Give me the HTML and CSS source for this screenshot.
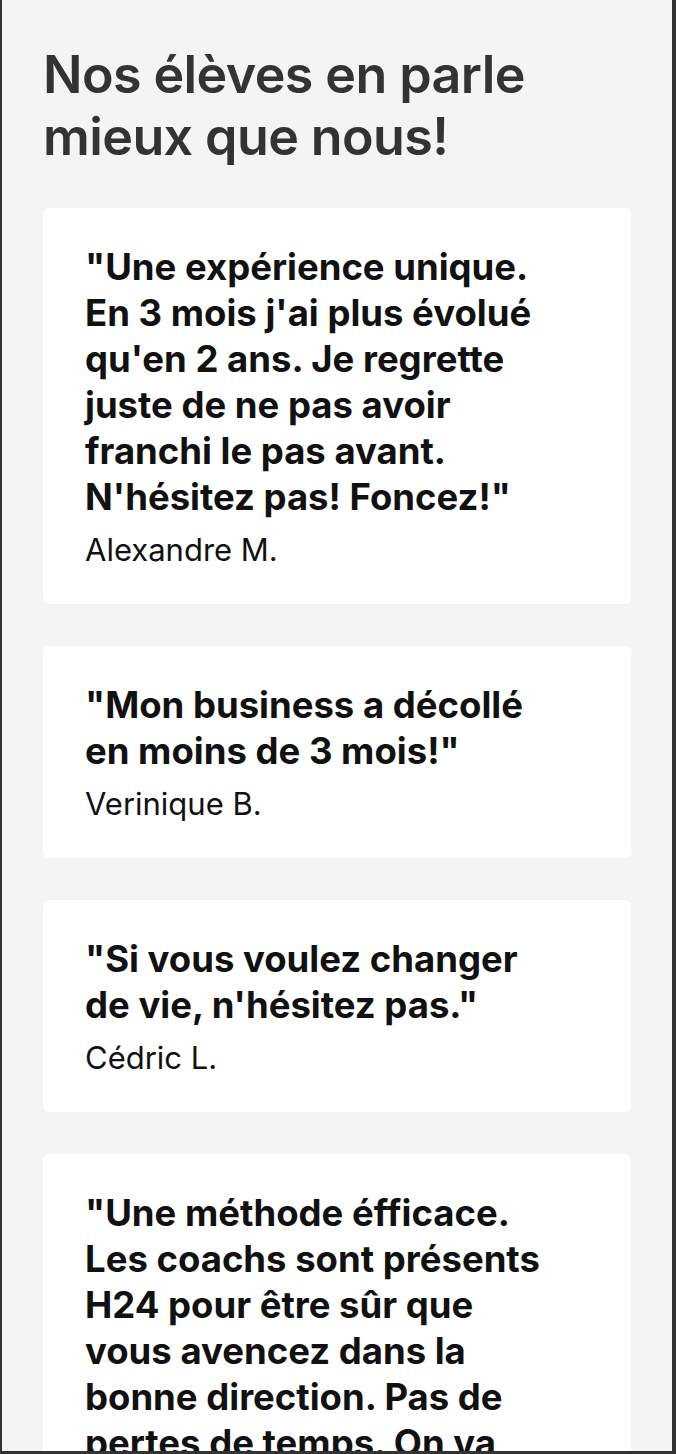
FILE: index.html
```html
<!DOCTYPE html>
<html lang="fr">
<head>
<meta charset="utf-8">
<title>Témoignages</title>
<link rel="stylesheet" href="styles.css">
</head>
<body>
<div class="frame">
  <section class="testimonials">
    <h1 class="title">Nos élèves en parle mieux que nous!</h1>
    <div class="list">
      <article class="card">
        <p class="quote">"Une expérience unique. En 3 mois j'ai plus évolué qu'en 2 ans. Je regrette juste de ne pas avoir franchi le pas avant. N'hésitez pas! Foncez!"</p>
        <p class="author">Alexandre M.</p>
      </article>
      <article class="card">
        <p class="quote">"Mon business a décollé en moins de 3 mois!"</p>
        <p class="author">Verinique B.</p>
      </article>
      <article class="card">
        <p class="quote">"Si vous voulez changer de vie, n'hésitez pas."</p>
        <p class="author">Cédric L.</p>
      </article>
      <article class="card">
        <p class="quote">"Une méthode éfficace. Les coachs sont présents H24 pour être sûr que vous avencez dans la bonne direction. Pas de pertes de temps. On va droit au but!"</p>
        <p class="author">Julien R.</p>
      </article>
    </div>
  </section>
</div>
</body>
</html>
```

FILE: styles.css
```css
html, body {
  margin: 0;
  padding: 0;
}

body {
  background: #f4f4f4;
  font-family: Inter, "Noto Sans", "Liberation Sans", sans-serif;
}

.frame {
  box-sizing: border-box;
  height: 100vh;
  overflow: hidden;
  border-left: 2px solid #333;
  border-right: 4px solid #333;
  border-bottom: 3px solid #333;
  background: #f4f4f4;
}

.testimonials {
  padding: 44px 41px 40px;
}

.title {
  margin: 0 0 40px;
  font-size: 52px;
  line-height: 62px;
  font-weight: 600;
  color: #333;
  letter-spacing: -0.6px;
}

.list {
  display: flex;
  flex-direction: column;
  gap: 42px;
}

.card {
  background: #fff;
  border-radius: 6px;
  padding: 36px 42px 34px;
}

.quote {
  margin: 0;
  max-width: 482px;
  font-size: 36.5px;
  line-height: 46px;
  font-weight: 700;
  color: #111;
}

.author {
  margin: 10px 0 0;
  font-size: 31px;
  line-height: 40px;
  font-weight: 400;
  color: #111;
}
```
